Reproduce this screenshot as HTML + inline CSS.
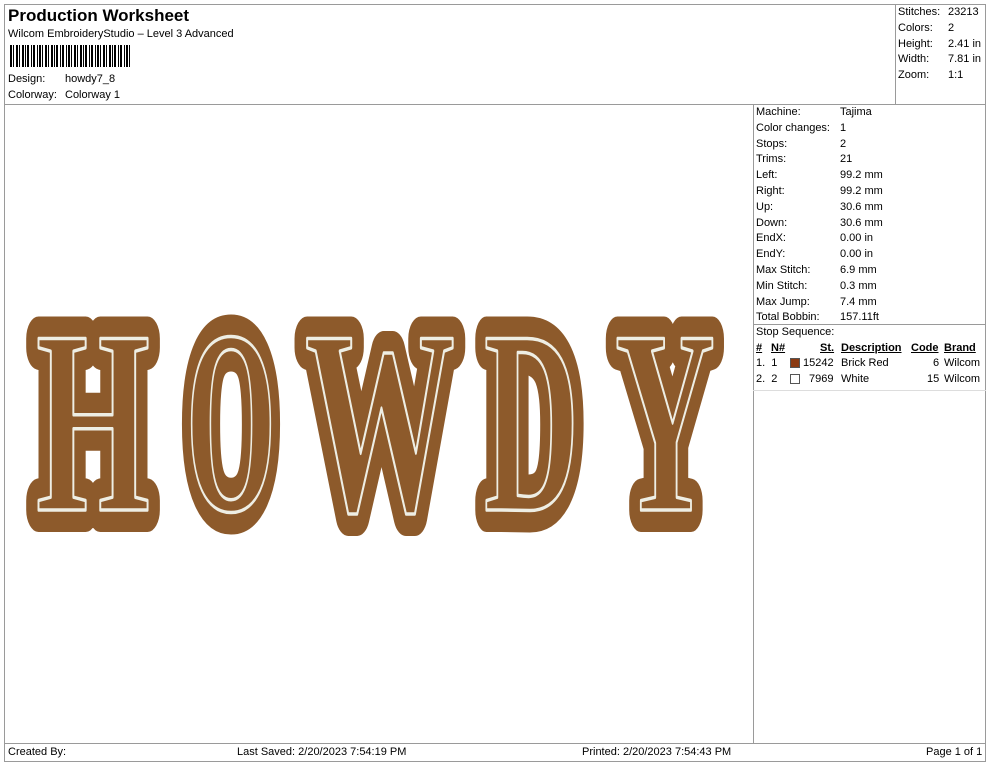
<!DOCTYPE html>
<html><head><meta charset="utf-8"><style>
*{margin:0;padding:0;box-sizing:border-box}
body{width:990px;height:762px;background:#fff;font-family:"Liberation Sans",Arial,sans-serif;font-size:11px;color:#000;position:relative;overflow:hidden}
.a{position:absolute;white-space:nowrap}
.ln{position:absolute;background:#9a9a9a}
</style></head><body>
<div class="ln" style="left:4px;top:4px;width:982px;height:1px"></div>
<div class="ln" style="left:4px;top:4px;width:1px;height:758px"></div>
<div class="ln" style="left:985px;top:4px;width:1px;height:758px"></div>
<div class="ln" style="left:4px;top:104px;width:982px;height:1px"></div>
<div class="ln" style="left:895px;top:4px;width:1px;height:100px"></div>
<div class="ln" style="left:753px;top:104px;width:1px;height:640px"></div>
<div class="ln" style="left:753px;top:324px;width:233px;height:1px"></div>
<div class="ln" style="left:753px;top:390px;width:233px;height:1px;background:#ddd"></div>
<div class="ln" style="left:4px;top:743px;width:982px;height:1px"></div>
<div class="ln" style="left:4px;top:761px;width:982px;height:1px"></div>

<div class="a" style="left:8px;top:6px;font-size:17px;font-weight:bold">Production Worksheet</div>
<div class="a" style="left:8px;top:28px;font-size:11px">Wilcom EmbroideryStudio – Level 3 Advanced</div>
<svg class="a" style="left:10px;top:45px" width="124" height="22">
<g fill="#000">
<rect x="0" y="0" width="2" height="22"/><rect x="3" y="0" width="1" height="22"/><rect x="6" y="0" width="2" height="22"/><rect x="9" y="0" width="1" height="22"/><rect x="12" y="0" width="2" height="22"/><rect x="15" y="0" width="1" height="22"/><rect x="17" y="0" width="2" height="22"/><rect x="21" y="0" width="1" height="22"/><rect x="23" y="0" width="2" height="22"/><rect x="27" y="0" width="1" height="22"/><rect x="29" y="0" width="2" height="22"/><rect x="32" y="0" width="1" height="22"/><rect x="35" y="0" width="2" height="22"/><rect x="38" y="0" width="1" height="22"/><rect x="41" y="0" width="2" height="22"/><rect x="44" y="0" width="1" height="22"/><rect x="46" y="0" width="2" height="22"/><rect x="50" y="0" width="1" height="22"/><rect x="52" y="0" width="2" height="22"/><rect x="56" y="0" width="1" height="22"/><rect x="58" y="0" width="2" height="22"/><rect x="61" y="0" width="1" height="22"/><rect x="64" y="0" width="2" height="22"/><rect x="67" y="0" width="1" height="22"/><rect x="70" y="0" width="2" height="22"/><rect x="73" y="0" width="1" height="22"/><rect x="75" y="0" width="2" height="22"/><rect x="79" y="0" width="1" height="22"/><rect x="81" y="0" width="2" height="22"/><rect x="85" y="0" width="1" height="22"/><rect x="87" y="0" width="2" height="22"/><rect x="90" y="0" width="1" height="22"/><rect x="93" y="0" width="2" height="22"/><rect x="96" y="0" width="1" height="22"/><rect x="99" y="0" width="2" height="22"/><rect x="102" y="0" width="1" height="22"/><rect x="104" y="0" width="2" height="22"/><rect x="108" y="0" width="1" height="22"/><rect x="110" y="0" width="2" height="22"/><rect x="114" y="0" width="1" height="22"/><rect x="116" y="0" width="2" height="22"/><rect x="119" y="0" width="1" height="22"/>
</g></svg>
<div class="a" style="left:8px;top:73px">Design:</div><div class="a" style="left:65px;top:73px">howdy7_8</div>
<div class="a" style="left:8px;top:89px">Colorway:</div><div class="a" style="left:65px;top:89px">Colorway 1</div>

<div class="a" style="left:898px;top:5px;line-height:15.8px">Stitches:<br>Colors:<br>Height:<br>Width:<br>Zoom:</div>
<div class="a" style="left:948px;top:5px;line-height:15.8px">23213<br>2<br>2.41 in<br>7.81 in<br>1:1</div>

<div class="a" style="left:756px;top:105px;line-height:15.8px">Machine:<br>Color changes:<br>Stops:<br>Trims:<br>Left:<br>Right:<br>Up:<br>Down:<br>EndX:<br>EndY:<br>Max Stitch:<br>Min Stitch:<br>Max Jump:<br>Total Bobbin:</div>
<div class="a" style="left:840px;top:105px;line-height:15.8px">Tajima<br>1<br>2<br>21<br>99.2 mm<br>99.2 mm<br>30.6 mm<br>30.6 mm<br>0.00 in<br>0.00 in<br>6.9 mm<br>0.3 mm<br>7.4 mm<br>157.11ft</div>
<div class="a" style="left:756px;top:326px">Stop Sequence:</div>
<div class="a" style="left:756px;top:342px;font-weight:bold;text-decoration:underline">#</div>
<div class="a" style="left:771px;top:342px;font-weight:bold;text-decoration:underline">N#</div>
<div class="a" style="left:820px;top:342px;font-weight:bold;text-decoration:underline">St.</div>
<div class="a" style="left:841px;top:342px;font-weight:bold;text-decoration:underline">Description</div>
<div class="a" style="left:911px;top:342px;font-weight:bold;text-decoration:underline">Code</div>
<div class="a" style="left:944px;top:342px;font-weight:bold;text-decoration:underline">Brand</div>
<div class="a" style="left:756px;top:357px">1.&nbsp; 1</div>
<div class="a" style="left:790px;top:358px;width:10px;height:10px;background:#8b3a12;border:1px solid #555"></div>
<div class="a" style="left:803px;top:357px">15242</div><div class="a" style="left:841px;top:357px">Brick Red</div>
<div class="a" style="left:933px;top:357px">6</div><div class="a" style="left:944px;top:357px">Wilcom</div>
<div class="a" style="left:756px;top:373px">2.&nbsp; 2</div>
<div class="a" style="left:790px;top:374px;width:10px;height:10px;background:#fff;border:1px solid #555"></div>
<div class="a" style="left:809px;top:373px">7969</div><div class="a" style="left:841px;top:373px">White</div>
<div class="a" style="left:927px;top:373px">15</div><div class="a" style="left:944px;top:373px">Wilcom</div>

<svg class="a" style="left:0;top:0" width="750" height="740">
<g font-family="Liberation Serif, serif" font-weight="bold" font-size="262" fill="#8f5a2c" stroke="#8d5a2b" stroke-width="44" stroke-linejoin="round">
<text x="36" y="510" textLength="114" lengthAdjust="spacingAndGlyphs">H</text>
<text x="186" y="510" textLength="90" lengthAdjust="spacingAndGlyphs">O</text>
<text x="305" y="510" textLength="150" lengthAdjust="spacingAndGlyphs">W</text>
<text x="484" y="510" textLength="95" lengthAdjust="spacingAndGlyphs">D</text>
<text x="615" y="510" textLength="100" lengthAdjust="spacingAndGlyphs">Y</text>
</g>
<g font-family="Liberation Serif, serif" font-weight="bold" font-size="262" fill="none" stroke="#eeeee4" stroke-width="3.5" stroke-linejoin="round">
<text x="36" y="510" textLength="114" lengthAdjust="spacingAndGlyphs">H</text>
<text x="186" y="510" textLength="90" lengthAdjust="spacingAndGlyphs">O</text>
<text x="305" y="510" textLength="150" lengthAdjust="spacingAndGlyphs">W</text>
<text x="484" y="510" textLength="95" lengthAdjust="spacingAndGlyphs">D</text>
<text x="615" y="510" textLength="100" lengthAdjust="spacingAndGlyphs">Y</text>
</g>
</svg>

<div class="a" style="left:8px;top:746px">Created By:</div>
<div class="a" style="left:237px;top:746px">Last Saved: 2/20/2023 7:54:19 PM</div>
<div class="a" style="left:582px;top:746px">Printed: 2/20/2023 7:54:43 PM</div>
<div class="a" style="left:926px;top:746px">Page 1 of 1</div>
</body></html>
